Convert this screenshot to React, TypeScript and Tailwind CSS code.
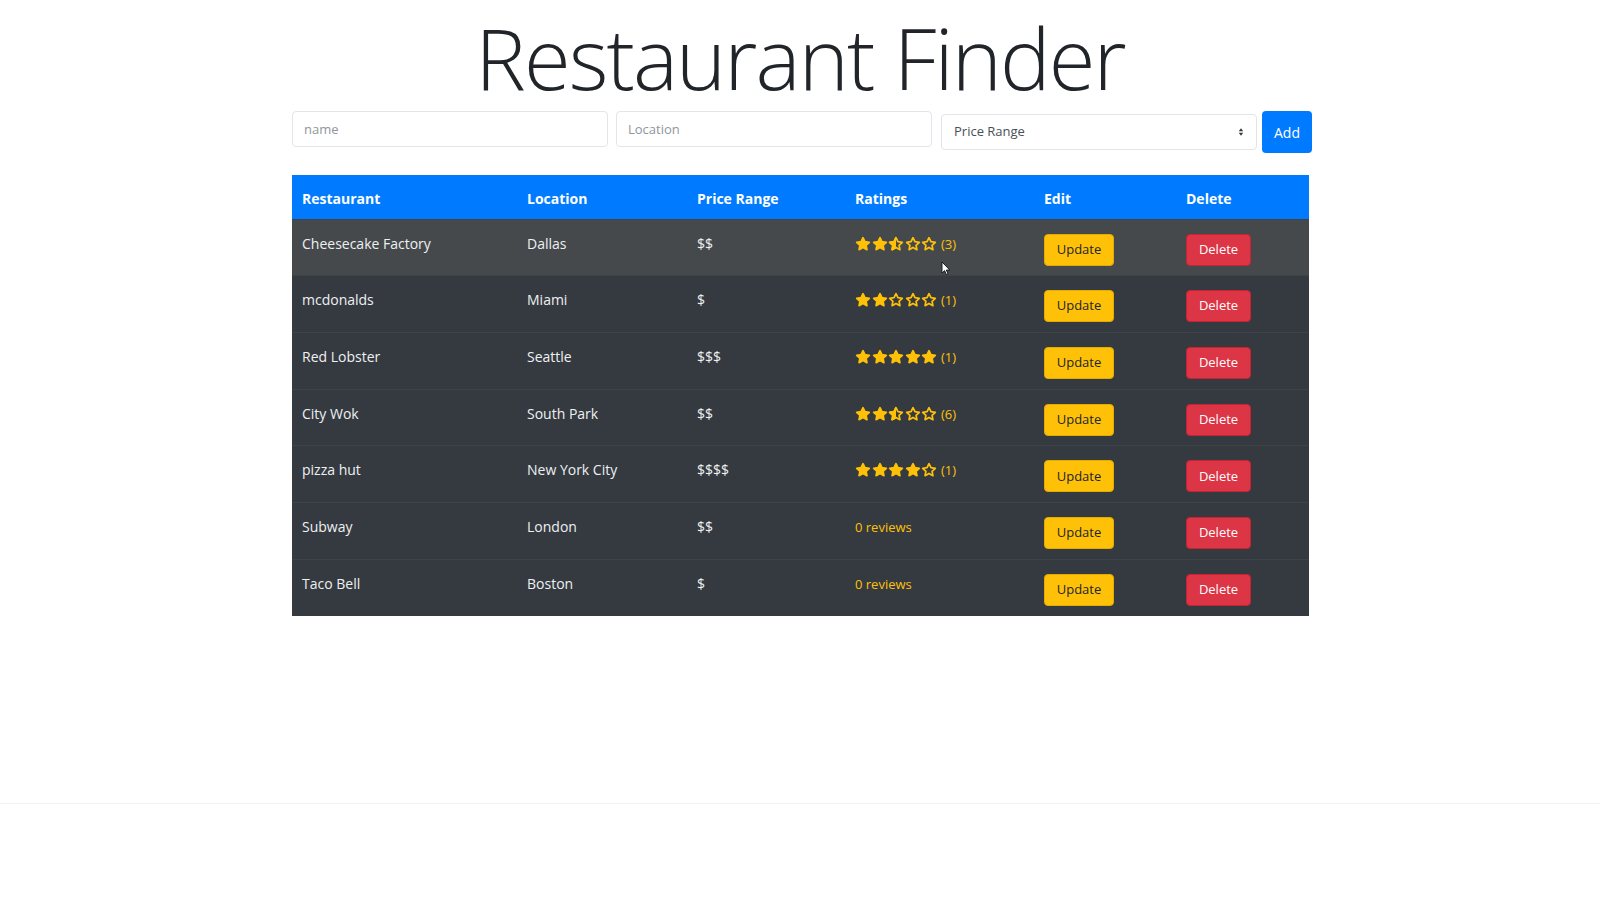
import React from 'react';

type Restaurant = {
  name: string;
  location: string;
  price: string;
  rating: number;
  count: number;
};

const restaurants: Restaurant[] = [
  { name: 'Cheesecake Factory', location: 'Dallas', price: '$$', rating: 2.5, count: 3 },
  { name: 'mcdonalds', location: 'Miami', price: '$', rating: 2, count: 1 },
  { name: 'Red Lobster', location: 'Seattle', price: '$$$', rating: 5, count: 1 },
  { name: 'City Wok', location: 'South Park', price: '$$', rating: 2.5, count: 6 },
  { name: 'pizza hut', location: 'New York City', price: '$$$$', rating: 4, count: 1 },
  { name: 'Subway', location: 'London', price: '$$', rating: 0, count: 0 },
  { name: 'Taco Bell', location: 'Boston', price: '$', rating: 0, count: 0 },
];

const STAR = '12,2.5 14.9,8.6 21.5,9.4 16.6,13.9 17.9,20.5 12,17.2 6.1,20.5 7.4,13.9 2.5,9.4 9.1,8.6';

const StarIcon: React.FC<{ filled: boolean }> = ({ filled }) => (
  <svg viewBox="0 0 24 24" className="w-[16px] h-[16px]">
    <polygon
      points={STAR}
      fill={filled ? '#ffc107' : 'none'}
      stroke="#ffc107"
      strokeWidth={2.6}
      strokeLinejoin="round"
    />
  </svg>
);

const Stars: React.FC<{ rating: number }> = ({ rating }) => {
  const stars = [];
  for (let i = 1; i <= 5; i++) {
    if (rating >= i) {
      stars.push(<StarIcon key={i} filled />);
    } else if (rating >= i - 0.5) {
      stars.push(
        <span key={i} className="relative w-[16px] h-[16px]">
          <StarIcon filled={false} />
          <span className="absolute left-0 top-0 w-[8px] h-[16px] overflow-hidden">
            <StarIcon filled />
          </span>
        </span>
      );
    } else {
      stars.push(<StarIcon key={i} filled={false} />);
    }
  }
  return <span className="flex items-center gap-[0.5px]">{stars}</span>;
};

const Cursor = () => (
  <svg viewBox="0 0 10 15" className="absolute left-[86px] top-[27px] w-[10px] h-[15px]">
    <path d="M1 1 L1 12 L3.6 9.6 L5.4 13.6 L7 12.9 L5.3 9 L8.8 9 Z" fill="#ffffff" stroke="#111111" strokeWidth="0.9" strokeLinejoin="round" />
  </svg>
);

export default function App() {
  return (
    <div className="min-h-[900px] bg-white font-['Open_Sans',sans-serif]">
      <div className="h-[804px] border-b border-[#eef3f7]">
        <h1 className="h-[112px] text-center text-[85px] leading-[114px] tracking-[-1.9px] font-light text-[#212529]">
          Restaurant Finder
        </h1>

        <div className="mx-auto w-[1024px] pl-[4px]">
          <form className="flex items-start -mt-[1px]" onSubmit={(e) => e.preventDefault()}>
            <input
              type="text"
              placeholder="name"
              className="w-[316px] h-[36px] px-[11px] rounded-[4px] border border-[#e1e5ea] text-[13px] text-[#495057] placeholder:text-[#8f969d] outline-none"
            />
            <input
              type="text"
              placeholder="Location"
              className="ml-[8px] w-[316px] h-[36px] px-[11px] rounded-[4px] border border-[#e1e5ea] text-[13px] text-[#495057] placeholder:text-[#8f969d] outline-none"
            />
            <div className="ml-[9px] mt-[3px] w-[316px] h-[36px] px-[12px] rounded-[4px] border border-[#e1e5ea] flex items-center justify-between text-[13px] text-[#495057]">
              <span>Price Range</span>
              <svg viewBox="0 0 8 12" className="w-[6px] h-[10px]">
                <path d="M4 1 L7 5 L1 5 Z M4 11 L1 7 L7 7 Z" fill="#343a40" />
              </svg>
            </div>
            <button className="ml-[5px] w-[50px] h-[42px] rounded-[4px] bg-[#007bff] text-white text-[14px]">
              Add
            </button>
          </form>

          <table className="mt-[22px] w-[1017px] table-fixed border-collapse text-[14px]">
            <colgroup>
              <col className="w-[225px]" />
              <col className="w-[170px]" />
              <col className="w-[158px]" />
              <col className="w-[189px]" />
              <col className="w-[142px]" />
              <col className="w-[133px]" />
            </colgroup>
            <thead>
              <tr className="h-[44px] bg-[#007bff] text-white text-left">
                <th className="pl-[10px] pt-[3px] font-bold">Restaurant</th>
                <th className="pl-[10px] pt-[3px] font-bold">Location</th>
                <th className="pl-[10px] pt-[3px] font-bold">Price Range</th>
                <th className="pl-[10px] pt-[3px] font-bold">Ratings</th>
                <th className="pl-[10px] pt-[3px] font-bold">Edit</th>
                <th className="pl-[10px] pt-[3px] font-bold">Delete</th>
              </tr>
            </thead>
            <tbody className="text-[#eef0f2]">
              {restaurants.map((r, idx) => (
                <tr
                  key={r.name}
                  className={`h-[56.7px] align-top border-t border-[#3d4349] ${idx === 0 ? 'bg-[#45494c]' : 'bg-[#343a40]'}`}
                >
                  <td className="pl-[10px] pt-[14px] leading-[20px]">{r.name}</td>
                  <td className="pl-[10px] pt-[14px] leading-[20px]">{r.location}</td>
                  <td className="pl-[10px] pt-[14px] leading-[20px]">{r.price}</td>
                  <td className="pl-[10px] pt-[14px] leading-[20px]">
                    <div className="relative flex items-center h-[20px] text-[#ffc107]">
                      {r.count > 0 ? (
                        <>
                          <Stars rating={r.rating} />
                          <span className="ml-[4px] text-[13px]">({r.count})</span>
                        </>
                      ) : (
                        <span className="text-[13px]">0 reviews</span>
                      )}
                      {idx === 0 && <Cursor />}
                    </div>
                  </td>
                  <td className="pl-[10px] pt-[14px]">
                    <button className="w-[70px] h-[32px] rounded-[4px] bg-[#ffc107] border border-[#e5ac00] text-[#212529] text-[13px]">
                      Update
                    </button>
                  </td>
                  <td className="pl-[10px] pt-[14px]">
                    <button className="w-[65px] h-[32px] rounded-[4px] bg-[#dc3545] border border-[#c82333] text-white text-[13px]">
                      Delete
                    </button>
                  </td>
                </tr>
              ))}
            </tbody>
          </table>
        </div>
      </div>
    </div>
  );
}
